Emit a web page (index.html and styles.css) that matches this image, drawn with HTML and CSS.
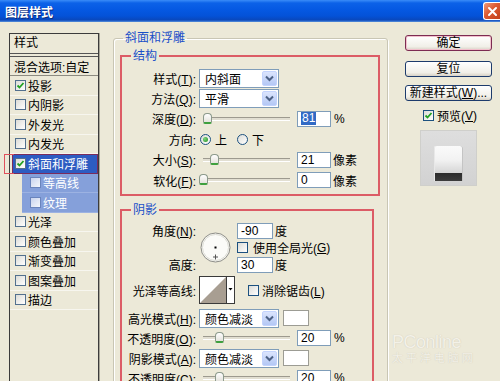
FILE: index.html
```html
<!DOCTYPE html>
<html lang="zh-CN">

<head>
    <meta charset="UTF-8">
    <meta name="viewport" content="width=device-width, initial-scale=1.0">
    <title>图层样式</title>
    <link rel="stylesheet" href="styles.css">
</head>

<body>
    <div class="window">
        <div class="titlebar">
            <span class="title">图层样式</span>
            <span class="close-btn">
                <svg width="11" height="11" viewBox="0 0 11 11"><path d="M2 2 L9 9 M9 2 L2 9" stroke="#fff" stroke-width="2" stroke-linecap="round"/></svg>
            </span>
        </div>

        <div class="content">
            <!-- left: style list -->
            <div class="style-list">
                <div class="list-head">样式</div>
                <div class="list-item blend">混合选项:自定</div>
                <div class="list-item"><span class="cb"><svg viewBox="0 0 9 9"><path d="M1.5 4.5 L3.5 6.5 L7.5 2" stroke="#21a121" stroke-width="1.8" fill="none"/></svg></span>投影</div>
                <div class="list-item"><span class="cb"></span>内阴影</div>
                <div class="list-item"><span class="cb"></span>外发光</div>
                <div class="list-item"><span class="cb"></span>内发光</div>
                <div class="list-item selected"><span class="cb"><svg viewBox="0 0 9 9"><path d="M1.5 4.5 L3.5 6.5 L7.5 2" stroke="#21a121" stroke-width="1.8" fill="none"/></svg></span>斜面和浮雕</div>
                <div class="list-item sub"><span class="cb"></span>等高线</div>
                <div class="list-item sub"><span class="cb"></span>纹理</div>
                <div class="list-item"><span class="cb"></span>光泽</div>
                <div class="list-item"><span class="cb"></span>颜色叠加</div>
                <div class="list-item"><span class="cb"></span>渐变叠加</div>
                <div class="list-item"><span class="cb"></span>图案叠加</div>
                <div class="list-item"><span class="cb"></span>描边</div>
            </div>

            <!-- middle: settings -->
            <fieldset class="group">
                <legend>斜面和浮雕</legend>

                <fieldset class="section struct">
                    <legend>结构</legend>
                    <div class="row">
                        <span class="lbl">样式(<u>T</u>):</span>
                        <div class="select"><span>内斜面</span><span class="drop"><svg width="9" height="7" viewBox="0 0 9 7"><path d="M1 1.5 L4.5 5 L8 1.5" stroke="#4d6185" stroke-width="2" fill="none"/></svg></span></div>
                    </div>
                    <div class="row">
                        <span class="lbl">方法(<u>Q</u>):</span>
                        <div class="select"><span>平滑</span><span class="drop"><svg width="9" height="7" viewBox="0 0 9 7"><path d="M1 1.5 L4.5 5 L8 1.5" stroke="#4d6185" stroke-width="2" fill="none"/></svg></span></div>
                    </div>
                    <div class="row">
                        <span class="lbl">深度(<u>D</u>):</span>
                        <div class="slider"><div class="track"></div><span class="thumb" style="left: 4px"></span></div>
                        <div class="num"><span class="sel-text">81</span></div>
                        <span class="unit">%</span>
                    </div>
                    <div class="row">
                        <span class="lbl">方向:</span>
                        <span class="radio on"></span><span>上</span>
                        <span class="radio second"></span><span>下</span>
                    </div>
                    <div class="row">
                        <span class="lbl">大小(<u>S</u>):</span>
                        <div class="slider"><div class="track"></div><span class="thumb" style="left: 11px"></span></div>
                        <div class="num">21</div>
                        <span class="unit px">像素</span>
                    </div>
                    <div class="row">
                        <span class="lbl">软化(<u>F</u>):</span>
                        <div class="slider"><div class="track"></div><span class="thumb" style="left: 0px"></span></div>
                        <div class="num">0</div>
                        <span class="unit px">像素</span>
                    </div>
                </fieldset>

                <fieldset class="section shadow">
                    <legend>阴影</legend>
                    <div class="angle-block">
                        <span class="lbl angle-lbl">角度(<u>N</u>):</span>
                        <span class="dial">
                            <svg width="31" height="31" viewBox="0 0 31 31">
                                <circle cx="15.5" cy="15.5" r="14.5" fill="#fbfbf8" stroke="#8c8c86"/>
                                <circle cx="15.5" cy="15.5" r="13" fill="none" stroke="#dcdcd4"/>
                                <rect x="14.5" y="14.5" width="2" height="2" fill="#000"/>
                                <path d="M15.5 22.5 V27.5 M13 25 H18" stroke="#555" stroke-width="1"/>
                            </svg>
                        </span>
                        <span class="field"><span class="num short">-90</span><span class="unit">度</span></span>
                        <span class="field global"><span class="cb"></span>使用全局光(<u>G</u>)</span>
                        <span class="lbl height-lbl">高度:</span>
                        <span class="field height-field"><span class="num short">30</span><span class="unit">度</span></span>
                    </div>
                    <div class="row contour-row">
                        <span class="lbl">光泽等高线:</span>
                        <svg class="contour" width="36" height="28" viewBox="0 0 36 28">
                            <rect x="0.5" y="0.5" width="35" height="27" fill="#fff" stroke="#3a3a3a"/>
                            <polygon points="1,27 27,1 27,27" fill="#a89e92"/>
                            <line x1="27.5" y1="1" x2="27.5" y2="27" stroke="#3a3a3a"/>
                            <polygon points="29.5,12 33.5,12 31.5,14.5" fill="#000"/>
                        </svg>
                        <span class="cb anti"></span><span>消除锯齿(<u>L</u>)</span>
                    </div>
                    <div class="row mode-row">
                        <span class="lbl">高光模式(<u>H</u>):</span>
                        <div class="select"><span>颜色减淡</span><span class="drop"><svg width="9" height="7" viewBox="0 0 9 7"><path d="M1 1.5 L4.5 5 L8 1.5" stroke="#4d6185" stroke-width="2" fill="none"/></svg></span></div>
                        <span class="swatch"></span>
                    </div>
                    <div class="row">
                        <span class="lbl">不透明度(<u>O</u>):</span>
                        <div class="slider"><div class="track"></div><span class="thumb" style="left: 16px"></span></div>
                        <div class="num">20</div>
                        <span class="unit">%</span>
                    </div>
                    <div class="row">
                        <span class="lbl">阴影模式(<u>A</u>):</span>
                        <div class="select"><span>颜色减淡</span><span class="drop"><svg width="9" height="7" viewBox="0 0 9 7"><path d="M1 1.5 L4.5 5 L8 1.5" stroke="#4d6185" stroke-width="2" fill="none"/></svg></span></div>
                        <span class="swatch"></span>
                    </div>
                    <div class="row">
                        <span class="lbl">不透明度(<u>C</u>):</span>
                        <div class="slider"><div class="track"></div><span class="thumb" style="left: 16px"></span></div>
                        <div class="num">20</div>
                        <span class="unit">%</span>
                    </div>
                </fieldset>
            </fieldset>

            <!-- right: buttons and preview -->
            <div class="side">
                <div class="btn default">确定</div>
                <div class="btn">复位</div>
                <div class="btn">新建样式(<u>W</u>)...</div>
                <div class="preview-check">
                    <span class="cb"><svg viewBox="0 0 9 9"><path d="M1.5 4.5 L3.5 6.5 L7.5 2" stroke="#21a121" stroke-width="1.8" fill="none"/></svg></span>预览(<u>V</u>)
                </div>
                <div class="preview">
                    <div class="preview-swatch"></div>
                </div>
            </div>
        </div>

        <div class="watermark">
            <div class="wm-logo">PConline</div>
            <div class="wm-sub">太平洋电脑网</div>
        </div>
    </div>
</body>

</html>
```

FILE: styles.css
```css
* {
    box-sizing: border-box;
}

body {
    margin: 0;
    width: 500px;
    height: 381px;
    overflow: hidden;
    background: #ece9d8;
    font-family: "Liberation Sans", "Noto Sans CJK SC", sans-serif;
    font-size: 12px;
    color: #000;
}

.window {
    position: relative;
    height: 381px;
}

u {
    text-decoration: underline;
}

/* title bar */

.titlebar {
    height: 22px;
    display: flex;
    align-items: center;
    justify-content: space-between;
    padding-left: 5px;
    background: linear-gradient(#3a8cf8 0, #0c62e8 3px, #0558e2 10px, #0452d8 16px, #0a48bc 20px, #5a92dc 22px);
}

.title {
    color: #fff;
    font-weight: bold;
    font-size: 12px;
    font-family: "Noto Sans CJK SC", sans-serif;
    text-shadow: 1px 1px 0 #0c2a7a;
}

.close-btn {
    width: 17px;
    height: 18px;
    display: flex;
    align-items: center;
    justify-content: center;
    border: 1px solid #fff;
    border-right: none;
    border-radius: 3px 0 0 3px;
    background: linear-gradient(135deg, #ee9a7c, #dc5a32 45%, #c2401a);
}

/* layout */

.content {
    display: flex;
    align-items: flex-start;
    padding: 9px 0 0 9px;
}

/* style list */

.style-list {
    flex: none;
    width: 90px;
    height: 360px;
    margin-top: 2px;
    border: 1px solid #3c3c3c;
    box-shadow: 1px 0 0 #a8a698;
}

.list-head {
    height: 23px;
    line-height: 19px;
    padding-left: 4px;
    border-bottom: 4px double #555;
}

.list-item {
    height: 19.5px;
    display: flex;
    align-items: center;
    padding-left: 5px;
    white-space: nowrap;
    border-bottom: 1px solid #f7f6ef;
}

.list-item.blend {
    height: 19px;
    padding-left: 4px;
    border-bottom: 1px solid #8c8a80;
}

.list-item.selected {
    position: relative;
    margin-left: 2px;
    padding-left: 2px;
    color: #fff;
    background: #2d5cc2;
    border: 1px solid #7a2c5c;
}

.list-item.selected::before {
    content: "";
    position: absolute;
    left: -9px;
    top: -1px;
    bottom: -1px;
    width: 9px;
    border: 1px solid #e0505c;
    border-right: none;
}

.list-item.sub {
    margin-left: 12px;
    padding-left: 8px;
    color: #fff;
    background: #85a0da;
    border-bottom-color: #9cb2e2;
}

.cb {
    flex: none;
    width: 11px;
    height: 11px;
    margin-right: 2px;
    display: inline-flex;
    border: 1px solid #1c5180;
    background: linear-gradient(135deg, #dcdcd7, #fff);
}

.cb svg {
    width: 9px;
    height: 9px;
}

.list-item .cb {
    border-color: #52708e;
}

.sub .cb {
    background: linear-gradient(135deg, #c9d4ee, #f4f6fb);
    border-color: #6a84bc;
}

/* group boxes */

fieldset {
    min-width: 0;
    margin: 0;
    padding: 0;
}

legend {
    padding: 0 2px;
    margin-left: 9px;
    line-height: 14px;
    color: #1a4fc8;
}

.group {
    flex: none;
    width: 275px;
    height: 400px;
    margin-left: 14px;
    border: 1px solid #c9c6b4;
    border-radius: 3px;
    box-shadow: 1px 1px 0 #fff, inset 1px 1px 0 #fff;
}

.section {
    width: 260px;
    margin: 4px 0 0 6px;
    padding: 5px 0 4px 0;
    border: 2px solid #dc5c66;
}

.section.shadow {
    width: 254px;
    margin-top: 7px;
    height: 200px;
}

.row {
    display: flex;
    align-items: center;
    height: 20px;
    white-space: nowrap;
}

.struct .row {
    height: 20.4px;
}

.lbl {
    flex: none;
    width: 74px;
    margin-right: 3px;
    text-align: right;
    white-space: nowrap;
}

/* controls */

.select {
    flex: none;
    width: 80px;
    height: 19px;
    display: flex;
    align-items: center;
    justify-content: space-between;
    padding: 0 1px 0 5px;
    background: #fff;
    border: 1px solid #7f9db9;
}

.drop {
    width: 15px;
    height: 15px;
    display: flex;
    align-items: center;
    justify-content: center;
    border: 1px solid #c3d3fd;
    border-radius: 2px;
    background: linear-gradient(#dbe4fd, #b4c8f5);
}

.slider {
    flex: none;
    position: relative;
    width: 95px;
    height: 14px;
    margin-right: 3px;
}

.track {
    margin: 5px 4px 0 4px;
    height: 4px;
    background: #e2dfd2;
    border-top: 1px solid #9d9a8f;
    border-bottom: 1px solid #fff;
}

.thumb {
    position: absolute;
    top: 1px;
    width: 9px;
    height: 11px;
    border: 1px solid #8c9a8c;
    border-bottom: 2px solid #3ea03e;
    border-radius: 4px 4px 2px 2px;
    background: linear-gradient(#fff, #e4e3dc);
}

.num {
    flex: none;
    width: 34px;
    height: 16px;
    display: flex;
    align-items: center;
    padding-left: 3px;
    background: #fff;
    border: 1px solid #7f9db9;
}

.num.short {
    width: 36px;
}

.sel-text {
    padding: 0 1px;
    color: #fff;
    background: #316ac5;
    line-height: 13px;
}

.unit {
    margin-left: 3px;
}

.unit.px {
    margin-left: 2px;
}

.radio {
    flex: none;
    width: 11px;
    height: 11px;
    margin: 0 4px 0 1px;
    border-radius: 50%;
    border: 1px solid #1c5180;
    background: linear-gradient(135deg, #dcdcd7, #fff);
    display: inline-flex;
    align-items: center;
    justify-content: center;
}

.radio.on::after {
    content: "";
    width: 5px;
    height: 5px;
    border-radius: 50%;
    background: radial-gradient(circle at 35% 35%, #7fd57f, #1f8f1f);
}

.radio.second {
    margin-left: 10px;
}

/* angle block */

.angle-block {
    display: grid;
    grid-template-columns: 77px 38px auto;
    grid-template-rows: 17px 17px 17px;
    align-items: center;
    white-space: nowrap;
}

.angle-block .lbl {
    width: 77px;
    margin: 0;
    padding-right: 3px;
}

.angle-lbl {
    grid-column: 1;
    grid-row: 1;
}

.height-lbl {
    grid-column: 1;
    grid-row: 3;
}

.dial {
    grid-column: 2;
    grid-row: 1 / 4;
    display: flex;
    padding-left: 1px;
}

.field {
    grid-column: 3;
    display: flex;
    align-items: center;
}

.field .unit {
    margin-left: 2px;
}

.global .cb {
    margin-right: 5px;
}

.height-field {
    grid-row: 3;
}

.contour-row {
    height: 28px;
    margin-top: 3px;
}

.contour {
    flex: none;
}

.cb.anti {
    margin: 0 3px 0 13px;
}

.mode-row {
    margin-top: 4px;
}

.swatch {
    flex: none;
    width: 26px;
    height: 16px;
    margin-left: 4px;
    background: #fff;
    border: 1px solid #9c9c94;
}

/* right column */

.side {
    flex: none;
    width: 87px;
    margin: 4px 0 0 17px;
}

.btn {
    width: 87px;
    height: 16px;
    margin-bottom: 8px;
    line-height: 14px;
    text-align: center;
    white-space: nowrap;
    border: 1px solid #1d3b6c;
    border-radius: 3px;
    background: linear-gradient(#fff, #f1efe8 75%, #d8d2c6);
}

.btn.default {
    margin-bottom: 10px;
    border-color: #7c2c52;
    box-shadow: inset 0 0 0 1px #f2c0cc;
}

.preview-check {
    display: flex;
    align-items: center;
    height: 13px;
    margin: 5px 0 0 18px;
    white-space: nowrap;
}

.preview-check .cb {
    margin-right: 3px;
}

.preview {
    width: 57px;
    height: 56px;
    margin: 8px 0 0 15px;
    padding: 15px 0 0 13px;
    background: linear-gradient(#dedede, #d2d2d2);
    border: 1px solid #cfcfcb;
}

.preview-swatch {
    width: 29px;
    height: 35px;
    border-radius: 2px 2px 0 0;
    background: linear-gradient(#fafafa, #f2f2f2 40%, #d6d6d6 76%, #2c2c2c 78%, #3c3c3c);
    box-shadow: inset 1px 0 0 #e8e8e8, inset -1px 0 0 #c4c4c4;
}

/* watermark */

.watermark {
    position: absolute;
    left: 392px;
    top: 332px;
    color: #f3f1e8;
    text-shadow: 0 0 1px #c8c3b2;
    pointer-events: none;
}

.wm-logo {
    font-size: 18px;
    line-height: 20px;
    letter-spacing: -0.5px;
}

.wm-sub {
    font-size: 11px;
    line-height: 12px;
    letter-spacing: 3px;
}
```
